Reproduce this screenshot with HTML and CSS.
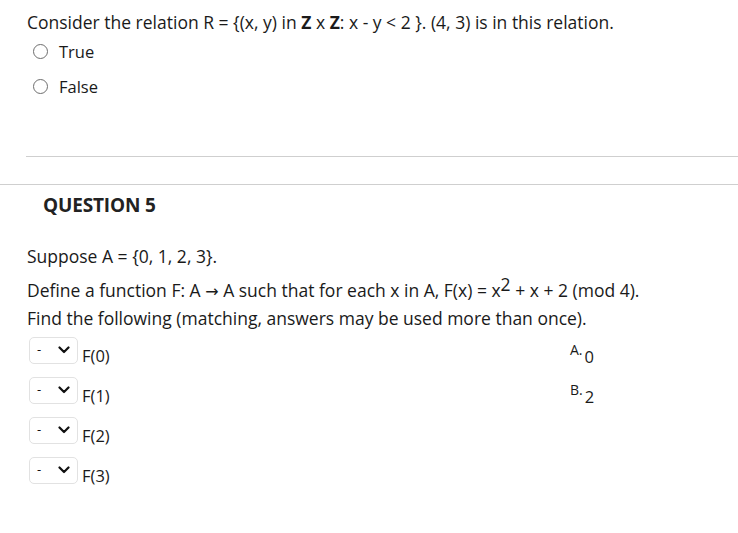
FILE: index.html
```html
<!DOCTYPE html>
<html lang="en">
<head>
<meta charset="utf-8">
<title>Quiz</title>
<link rel="stylesheet" href="styles.css">
</head>
<body>
<section class="question q4">
  <p class="stem">Consider the relation R = {(x, y) in <b>Z</b> x <b>Z</b>: x - y &lt; 2 }. (4, 3) is in this relation.</p>
  <ul class="options">
    <li class="option"><span class="radio"></span><span>True</span></li>
    <li class="option"><span class="radio"></span><span>False</span></li>
  </ul>
</section>
<div class="rule rule-inner"></div>
<div class="rule rule-outer"></div>
<section class="question q5">
  <h2 class="q-title">QUESTION 5</h2>
  <p class="para p-suppose">Suppose A = {0, 1, 2, 3}.</p>
  <p class="para p-define">Define a function F: A <span class="arrow">&#x2192;</span> A such that for each x in A, F(x) = x<sup>2</sup> + x + 2 (mod 4).</p>
  <p class="para p-find">Find the following (matching, answers may be used more than once).</p>
  <div class="match">
    <div class="prompts">
      <div class="prompt"><span class="select"><span class="dash">-</span><svg class="chev" viewBox="0 0 12 8" width="12" height="8"><path d="M1.5 1.5 L6 6 L10.5 1.5" fill="none" stroke="#111" stroke-width="2.2" stroke-linecap="round" stroke-linejoin="round"/></svg></span><span class="plabel">F(0)</span></div>
      <div class="prompt"><span class="select"><span class="dash">-</span><svg class="chev" viewBox="0 0 12 8" width="12" height="8"><path d="M1.5 1.5 L6 6 L10.5 1.5" fill="none" stroke="#111" stroke-width="2.2" stroke-linecap="round" stroke-linejoin="round"/></svg></span><span class="plabel">F(1)</span></div>
      <div class="prompt"><span class="select"><span class="dash">-</span><svg class="chev" viewBox="0 0 12 8" width="12" height="8"><path d="M1.5 1.5 L6 6 L10.5 1.5" fill="none" stroke="#111" stroke-width="2.2" stroke-linecap="round" stroke-linejoin="round"/></svg></span><span class="plabel">F(2)</span></div>
      <div class="prompt"><span class="select"><span class="dash">-</span><svg class="chev" viewBox="0 0 12 8" width="12" height="8"><path d="M1.5 1.5 L6 6 L10.5 1.5" fill="none" stroke="#111" stroke-width="2.2" stroke-linecap="round" stroke-linejoin="round"/></svg></span><span class="plabel">F(3)</span></div>
    </div>
    <div class="answers">
      <div class="answer"><span class="letter">A.</span><span class="aval">0</span></div>
      <div class="answer"><span class="letter">B.</span><span class="aval">2</span></div>
    </div>
  </div>
</section>
</body>
</html>
```

FILE: styles.css
```css
* { box-sizing: border-box; }
html, body { margin: 0; padding: 0; background: #fff; }
body {
  font-family: "Open Sans", "Noto Sans", sans-serif;
  font-size: 17.5px;
  color: #1a1a1a;
  width: 738px;
  height: 533px;
  overflow: hidden;
}
.stem {
  margin: 10px 0 0 27px;
  line-height: 24px;
}
.stem b { font-weight: 700; }
.options {
  list-style: none;
  margin: 5px 0 0 0;
  padding: 0 0 0 33px;
}
.option {
  display: flex;
  align-items: center;
  height: 24px;
  margin-bottom: 11px;
  gap: 11px;
  font-size: 16.5px;
}
.radio {
  width: 15px;
  height: 15px;
  border: 1.5px solid #6e6e6e;
  border-radius: 50%;
  flex: none;
}
.rule { height: 1px; background: #cfcfcf; }
.rule-inner { margin: 58px 0 0 26px; }
.rule-outer { margin-top: 27px; }
.q-title {
  margin: 8px 0 0 43px;
  font-size: 19px;
  line-height: 24px;
  font-weight: 700;
  letter-spacing: -0.15px;
  color: #222;
}
.para {
  margin: 0 0 0 27px;
  line-height: 24px;
}
.p-suppose { margin-top: 27px; }
.p-define { margin-top: 10px; }
.p-define sup { font-size: 17.5px; line-height: 0; vertical-align: 6px; }
.arrow { font-family: "DejaVu Sans", sans-serif; font-size: 16px; }
.p-find { margin-top: 2px; }
.match {
  display: grid;
  grid-template-columns: 541px auto;
  padding-left: 29px;
  margin-top: 7px;
}
.prompts { display: flex; flex-direction: column; gap: 13px; }
.prompt { display: flex; align-items: flex-end; height: 27px; }
.select {
  width: 49px;
  height: 27px;
  border: 1px solid #e2e2e2;
  border-radius: 5px;
  display: flex;
  align-items: center;
  justify-content: space-between;
  padding: 0 7px 0 7px;
  background: #fff;
  flex: none;
}
.dash { font-size: 13px; line-height: 1; color: #111; margin-top: -3px; }
.chev { margin-top: -2px; }
.plabel {
  margin-left: 4px;
  line-height: 1;
  font-size: 16.5px;
}
.answers { display: flex; flex-direction: column; gap: 13px; padding-top: 6px; }
.answer { display: flex; align-items: flex-start; height: 27px; }
.letter { font-size: 14px; line-height: 14px; }
.aval { margin-left: 2px; margin-top: 6px; line-height: 16px; font-size: 16.5px; }
```
